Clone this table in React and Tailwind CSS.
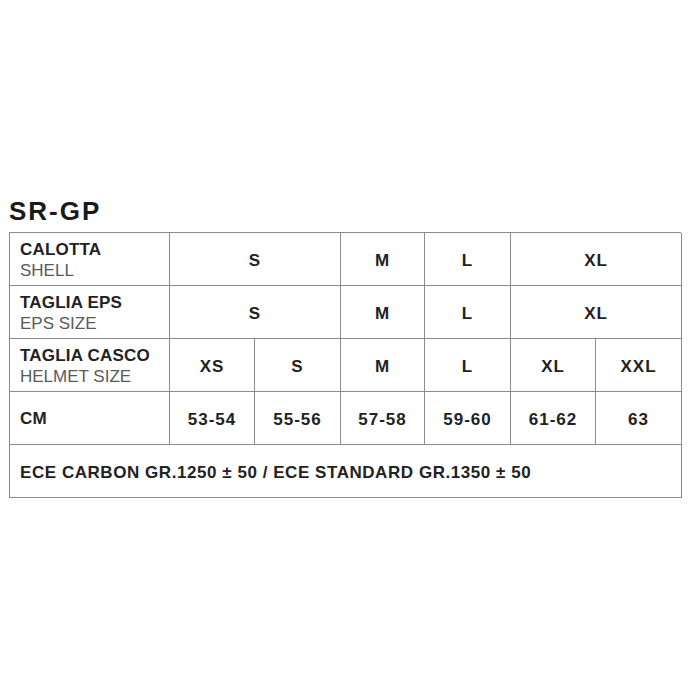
const font = { fontFamily: '"Liberation Sans", Arial, sans-serif' }

function LabelCell({ title, sub }) {
  return (
    <div className="h-[53px] border-r border-b border-[#8c8c8c] pl-[10px] pt-[1px] flex flex-col justify-center">
      <div className="text-[17px] leading-[21px] font-bold text-[#222] tracking-[0.2px]">{title}</div>
      {sub && <div className="text-[17px] leading-[21px] text-[#5a5a5a]">{sub}</div>}
    </div>
  )
}

function ValueCell({ children, span }) {
  return (
    <div
      className={
        'h-[53px] border-r border-b border-[#8c8c8c] flex items-center justify-center pt-[4px] text-[17px] font-bold text-[#222] tracking-[1px] ' +
        (span === 2 ? 'col-span-2' : '')
      }
    >
      {children}
    </div>
  )
}

export default function App() {
  return (
    <div className="w-[700px] h-[700px] bg-white pt-[196px]" style={font}>
      <h1 className="ml-[9px] text-[26px] leading-[30px] font-bold text-[#1a1a1a] tracking-[2px] mb-[6px]">SR-GP</h1>
      <div className="ml-[9px] w-[672px] grid grid-cols-[160px_85px_86px_84px_86px_85px_86px] border-t border-l border-[#8c8c8c]">
        <LabelCell title="CALOTTA" sub="SHELL" />
        <ValueCell span={2}>S</ValueCell>
        <ValueCell>M</ValueCell>
        <ValueCell>L</ValueCell>
        <ValueCell span={2}>XL</ValueCell>

        <LabelCell title="TAGLIA EPS" sub="EPS SIZE" />
        <ValueCell span={2}>S</ValueCell>
        <ValueCell>M</ValueCell>
        <ValueCell>L</ValueCell>
        <ValueCell span={2}>XL</ValueCell>

        <LabelCell title="TAGLIA CASCO" sub="HELMET SIZE" />
        <ValueCell>XS</ValueCell>
        <ValueCell>S</ValueCell>
        <ValueCell>M</ValueCell>
        <ValueCell>L</ValueCell>
        <ValueCell>XL</ValueCell>
        <ValueCell>XXL</ValueCell>

        <LabelCell title="CM" />
        <ValueCell>53-54</ValueCell>
        <ValueCell>55-56</ValueCell>
        <ValueCell>57-58</ValueCell>
        <ValueCell>59-60</ValueCell>
        <ValueCell>61-62</ValueCell>
        <ValueCell>63</ValueCell>

        <div className="col-span-7 h-[53px] border-r border-b border-[#8c8c8c] pl-[10px] pt-[3px] flex items-center text-[17px] font-bold text-[#222] tracking-[0.55px]">
          ECE CARBON GR.1250 ± 50 / ECE STANDARD GR.1350 ± 50
        </div>
      </div>
    </div>
  )
}
